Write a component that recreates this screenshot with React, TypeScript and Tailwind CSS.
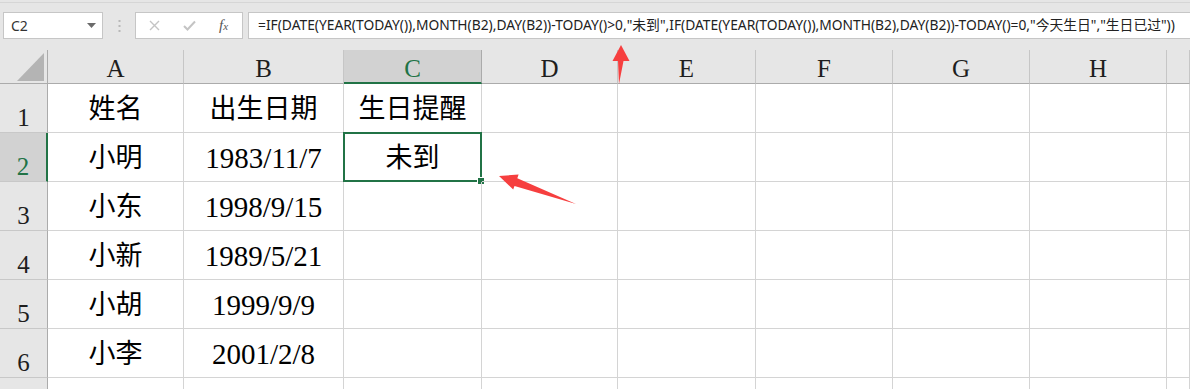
import React from "react";

const cols = [
  { key: "A", w: "w-[136px]" },
  { key: "B", w: "w-[160px]" },
  { key: "C", w: "w-[138px]" },
  { key: "D", w: "w-[136px]" },
  { key: "E", w: "w-[138px]" },
  { key: "F", w: "w-[137px]" },
  { key: "G", w: "w-[137px]" },
  { key: "H", w: "w-[137px]" },
  { key: "", w: "w-[23px]" },
];

const rows = [
  ["姓名", "出生日期", "生日提醒"],
  ["小明", "1983/11/7", "未到"],
  ["小东", "1998/9/15", ""],
  ["小新", "1989/5/21", ""],
  ["小胡", "1999/9/9", ""],
  ["小李", "2001/2/8", ""],
  ["", "", ""],
];

const formula =
  '=IF(DATE(YEAR(TODAY()),MONTH(B2),DAY(B2))-TODAY()>0,"未到",IF(DATE(YEAR(TODAY()),MONTH(B2),DAY(B2))-TODAY()=0,"今天生日","生日已过"))';

const serif = "font-['Liberation_Serif','Noto_Sans_CJK_SC',serif]";
const ui = "font-['Noto_Sans','Noto_Sans_CJK_SC',sans-serif]";

function FormulaBar() {
  return (
    <div className="h-[50px] bg-[#e6e6e6] pt-[2px]">
      <div className={`flex items-start border-t border-[#d6d6d6] pt-[9px] ${ui}`}>
        {/* name box */}
        <div className="ml-[3px] w-[100px] h-[27px] bg-white border border-[#c6c6c6] flex items-center justify-between pl-[7px] pr-[6px]">
          <span className="text-[14px] text-[#333]">C2</span>
          <svg width="9" height="5" viewBox="0 0 9 5">
            <path d="M0 0 H9 L4.5 5 Z" fill="#6b6b6b" />
          </svg>
        </div>
        <div className="w-[32px] h-[27px] flex items-center justify-center">
          <svg width="3" height="12" viewBox="0 0 3 12">
            <rect x="0.5" y="0" width="2" height="2" fill="#b8b8b8" />
            <rect x="0.5" y="5" width="2" height="2" fill="#b8b8b8" />
            <rect x="0.5" y="10" width="2" height="2" fill="#b8b8b8" />
          </svg>
        </div>
        {/* cancel / enter / fx */}
        <div className="w-[108px] h-[27px] bg-white border border-[#c6c6c6] flex items-center pl-[13px] gap-[23px]">
          <svg width="11" height="11" viewBox="0 0 11 11">
            <path d="M1 1 L10 10 M10 1 L1 10" stroke="#c4c4c4" strokeWidth="1.4" />
          </svg>
          <svg width="13" height="11" viewBox="0 0 13 11">
            <path d="M1 6 L4.5 9.5 L12 1.5" stroke="#c4c4c4" strokeWidth="2" fill="none" />
          </svg>
          <span className="font-['Liberation_Serif',serif] italic text-[15px] text-[#555] leading-none">
            f<span className="text-[11px]">x</span>
          </span>
        </div>
        {/* formula text */}
        <div className="ml-[5px] flex-1 h-[27px] bg-white border border-[#c6c6c6] border-r-0 flex items-center pl-[9px] overflow-hidden whitespace-nowrap">
          <span className="text-[13.8px] text-[#222]">{formula}</span>
        </div>
      </div>
    </div>
  );
}

function Corner() {
  return (
    <div className="w-[48px] h-[34px] bg-[#e6e6e6] border-r border-b border-[#ababab] flex items-end justify-end pr-[3px] pb-[2px]">
      <svg width="27" height="28" viewBox="0 0 27 28">
        <path d="M27 0 V28 H0 Z" fill="#b4b4b4" />
      </svg>
    </div>
  );
}

export default function App() {
  return (
    <div className="relative w-[1190px] h-[389px] overflow-hidden bg-white">
      <FormulaBar />

      {/* column headers */}
      <div className={`flex ${serif}`}>
        <Corner />
        {cols.map((c) => {
          const sel = c.key === "C";
          return (
            <div
              key={c.key || "i"}
              className={`${c.w} h-[34px] shrink-0 flex items-center justify-center pt-[4px] text-[25px] leading-none ${
                sel
                  ? "bg-[#d2d2d2] text-[#217346] border-b-2 border-b-[#217346] border-r border-r-[#ababab]"
                  : "bg-[#e6e6e6] text-[#1e1e1e] border-b border-b-[#ababab] border-r border-r-[#c6c6c6]"
              }`}
            >
              {c.key}
            </div>
          );
        })}
      </div>

      {/* rows */}
      {rows.map((r, i) => {
        const sel = i === 1;
        return (
          <div key={i} className={`flex h-[49px] ${serif}`}>
            <div
              className={`w-[48px] shrink-0 flex items-end justify-center pb-[2px] text-[25px] leading-none border-b border-b-[#c8c8c8] ${
                sel
                  ? "bg-[#d2d2d2] text-[#217346] border-r-2 border-r-[#217346]"
                  : "bg-[#e6e6e6] text-[#1e1e1e] border-r border-r-[#ababab]"
              }`}
            >
              {i + 1}
            </div>
            {cols.map((c, j) => {
              const v = j < 3 ? r[j] : "";
              const active = i === 1 && j === 2;
              const isDate = j === 1 && i > 0;
              return (
                <div
                  key={j}
                  className={`${c.w} shrink-0 relative flex items-center justify-center pt-[3px] ${
                    isDate ? "text-[29px]" : "text-[27px]"
                  } text-black leading-none border-r border-b border-[#d4d4d4]`}
                >
                  {v}
                  {active && (
                    <>
                      <div className="absolute -top-[1px] -left-[1px] -right-[1px] -bottom-[1px] border-2 border-[#217346]" />
                      <div className="absolute -right-[4px] -bottom-[4px] w-[8px] h-[8px] bg-[#217346] border border-white" />
                    </>
                  )}
                </div>
              );
            })}
          </div>
        );
      })}

      {/* annotation arrows */}
      <svg className="absolute inset-0 pointer-events-none" width="1190" height="389">
        <polygon points="621,45 629.5,61 623.5,61 619,84 618,61 612.5,61" fill="#f63f3f" />
        <polygon points="499,176 518.6,174.6 517.3,178.3 576,204 514.5,185.9 513.2,189.6" fill="#f63f3f" />
      </svg>
    </div>
  );
}
